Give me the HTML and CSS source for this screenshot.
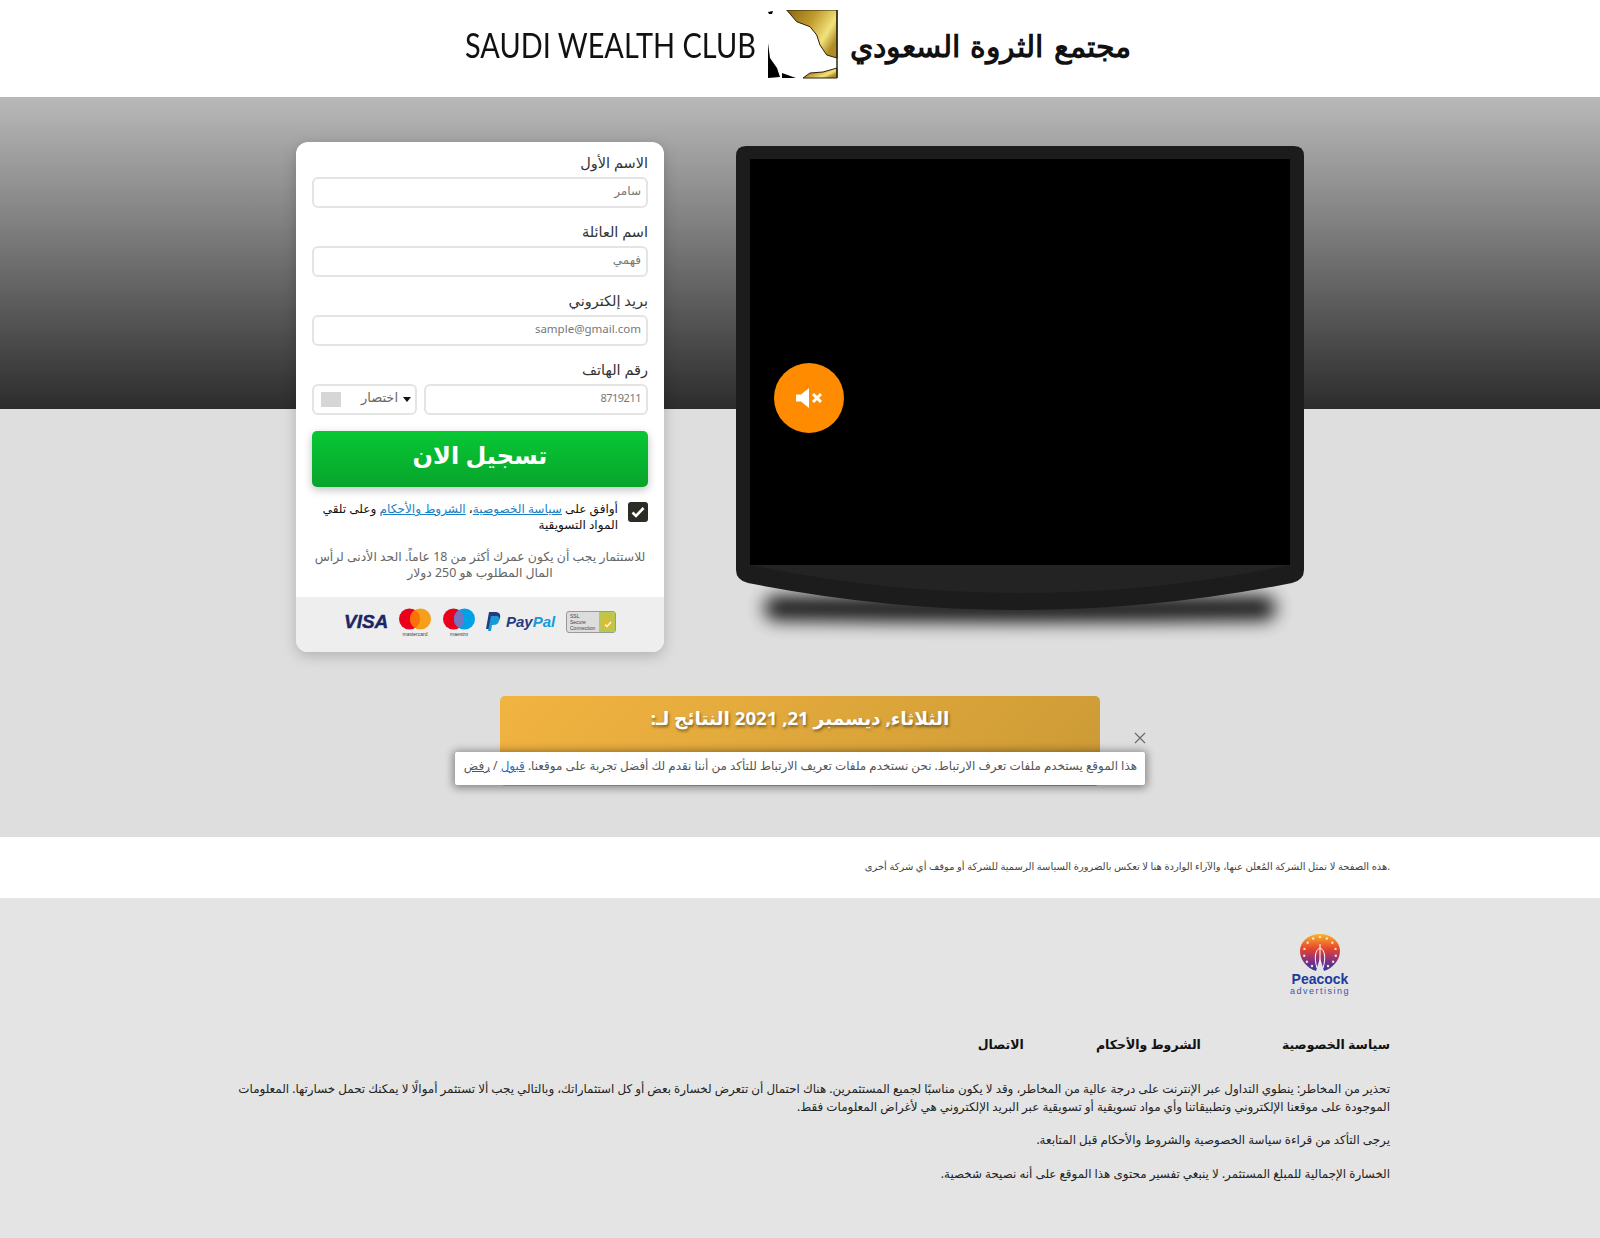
FILE: index.html
```html
<!DOCTYPE html>
<html lang="ar" dir="rtl">
<head>
    <meta charset="UTF-8">
    <title>مجتمع الثروة السعودي</title>
    <link rel="stylesheet" href="styles.css">
</head>
<body>

<header class="site-header">
    <div class="logo" dir="ltr">
        <span class="logo-en">SAUDI WEALTH CLUB</span>
        <svg class="logo-mark" width="70" height="69" viewBox="0 0 70 69">
            <defs>
                <linearGradient id="gold" x1="0" y1="0" x2="1" y2="0.6">
                    <stop offset="0" stop-color="#8a6410"/>
                    <stop offset="0.45" stop-color="#c09a2c"/>
                    <stop offset="0.8" stop-color="#f2e27a"/>
                    <stop offset="1" stop-color="#b08c28"/>
                </linearGradient>
            </defs>
            <path d="M18.700 0H69V48L58.700 45 52 35 48.700 25 42 16.700 28.700 11.700Z" fill="url(#gold)" stroke="#2a2208" stroke-width="1"/>
            <path d="M69 58L55 62 42 63 35 68H69Z" fill="url(#gold)" stroke="#2a2208" stroke-width="1"/>
            <path d="M69 0V68" stroke="#2a2a10" stroke-width="1.500"/>
            <path d="M0 33L2 48 9 58 12 67 0 68Z" fill="#000"/>
            <path d="M14 63L28 68H14Z" fill="#000"/>
            <path d="M0 2L5 1 4 4 1 4Z" fill="#000"/>
        </svg>
        <span class="logo-ar" dir="rtl">مجتمع الثروة السعودي</span>
    </div>
</header>

<section class="hero">
    <div class="hero-row">
        <div class="tv">
            <svg width="568" height="510" viewBox="0 0 568 510">
                <defs>
                    <filter id="blur" x="-10%" y="-100%" width="120%" height="300%">
                        <feGaussianBlur stdDeviation="9"/>
                    </filter>
                </defs>
                <path d="M36 450H532Q548 462 532 474Q284 478 36 474Q20 462 36 450Z" fill="#000" filter="url(#blur)" opacity="0.9"/>
                <path d="M10 0H558Q568 0 568 10V424Q568 434 556 437Q420 464 284 464Q148 464 12 437Q0 434 0 424V10Q0 0 10 0Z" fill="#1c1c1c"/>
                <path d="M14 419H554Q420 447 284 447Q148 447 14 419Z" fill="#232323"/>
                <rect x="14" y="13" width="540" height="406" fill="#000"/>
            </svg>
            <button class="mute-btn">
                <svg width="26" height="20" viewBox="0 0 26 20">
                    <path d="M0 6.500H5L13 0V20L5 13.500H0Z" fill="#fff"/>
                    <path d="M17 6L25 14M25 6L17 14" stroke="#fff" stroke-width="3"/>
                </svg>
            </button>
        </div>

        <form class="signup">
            <div class="signup-body">
                <label class="field-label">الاسم الأول</label>
                <input class="field" type="text" placeholder="سامر">
                <label class="field-label">اسم العائلة</label>
                <input class="field" type="text" placeholder="فهمي">
                <label class="field-label">بريد إلكتروني</label>
                <input class="field field-email" type="text" placeholder="sample@gmail.com">
                <label class="field-label">رقم الهاتف</label>
                <div class="phone-row">
                    <input class="field field-phone" type="text" placeholder="8719211">
                    <div class="prefix">
                        <span class="caret"></span>
                        <span class="prefix-text">اختصار</span>
                        <span class="flag"></span>
                    </div>
                </div>
                <button class="submit" type="button">تسجيل الان</button>
                <div class="consent">
                    <span class="check">
                        <svg width="14" height="12" viewBox="0 0 14 12"><path d="M1.500 6.500L5 10L12.500 2" fill="none" stroke="#fff" stroke-width="2.600"/></svg>
                    </span>
                    <p>أوافق على <a href="#">سياسة الخصوصية</a>، <a href="#">الشروط والأحكام</a> وعلى تلقي المواد التسويقية</p>
                </div>
                <p class="age-note">للاستثمار يجب أن يكون عمرك أكثر من 18 عاماً. الحد الأدنى لرأس المال المطلوب هو 250 دولار</p>
            </div>
            <div class="payments" dir="ltr">
                <span class="visa">VISA</span>
                <span class="card-mark">
                    <svg width="32" height="24" viewBox="0 0 32 24"><circle cx="10.500" cy="12" r="10.500" fill="#eb001b"/><circle cx="21.500" cy="12" r="10.500" fill="#f79e1b"/><path d="M16 3a10.500 10.500 0 0 1 0 18a10.500 10.500 0 0 1 0-18Z" fill="#ff5f00" opacity="0.7"/></svg>
                    <small>mastercard</small>
                </span>
                <span class="card-mark">
                    <svg width="32" height="24" viewBox="0 0 32 24"><circle cx="10.500" cy="12" r="10.500" fill="#eb001b"/><circle cx="21.500" cy="12" r="10.500" fill="#00a2e5"/><path d="M16 3a10.500 10.500 0 0 1 0 18a10.500 10.500 0 0 1 0-18Z" fill="#7673c0"/></svg>
                    <small>maestro</small>
                </span>
                <svg class="paypal-mark" width="15" height="19" viewBox="0 0 15 19">
                    <path d="M3 0H9C13 0 15 2 14 6 13 10 10 11 7 11H5L4 17H0Z" fill="#253b80"/>
                    <path d="M5 4H10C13 4 14 6 13 9 12 12 10 13 7 13H6L5 19H2Z" fill="#179bd7"/>
                </svg>
                <span class="paypal"><b>Pay</b><i>Pal</i></span>
                <span class="ssl">
                    <span class="ssl-text">SSL<br>Secure<br>Connection</span>
                    <svg class="ssl-lock" width="16" height="20" viewBox="0 0 16 20">
                        <rect width="16" height="20" fill="#b9c94e"/>
                        <path d="M5 9V6.500a3 3 0 0 1 6 0V9" fill="none" stroke="#e8b52c" stroke-width="1.500"/>
                        <rect x="3.500" y="9" width="9" height="7" fill="#e8b52c"/>
                        <path d="M6 12.500L8 14.500L12 10" fill="none" stroke="#fff" stroke-width="1.300"/>
                    </svg>
                </span>
            </div>
        </form>
    </div>

    <div class="results">
        <div class="results-box">
            <h2>الثلاثاء, ديسمبر 21, 2021 النتائج لـ:</h2>
        </div>
        <div class="cookie-bar">
            <span class="cookie-close">
                <svg width="12" height="12" viewBox="0 0 12 12"><path d="M1 1L11 11M11 1L1 11" stroke="#666" stroke-width="1.100"/></svg>
            </span>
            <p>هذا الموقع يستخدم ملفات تعرف الارتباط. نحن نستخدم ملفات تعريف الارتباط للتأكد من أننا نقدم لك أفضل تجربة على موقعنا. <a class="accept" href="#">قبول</a> / <a href="#">رفض</a></p>
        </div>
    </div>
</section>

<section class="notice">
    <p dir="ltr">هذه الصفحة لا تمثل الشركة المُعلن عنها، والآراء الواردة هنا لا تعكس بالضرورة السياسة الرسمية للشركة أو موقف أي شركة أخرى.</p>
</section>

<footer class="site-footer">
    <div class="peacock" dir="ltr">
        <svg width="42" height="38" viewBox="0 0 42 38">
            <defs>
                <linearGradient id="fan" x1="0" y1="0" x2="0" y2="1">
                    <stop offset="0" stop-color="#f7b52c"/>
                    <stop offset="0.4" stop-color="#e8442c"/>
                    <stop offset="0.75" stop-color="#7a2f8c"/>
                    <stop offset="1" stop-color="#2a3f9c"/>
                </linearGradient>
            </defs>
            <path d="M21 0C33 0 41 8 41 17 41 26 34 34 25 37L21 24 17 37C8 34 1 26 1 17 1 8 9 0 21 0Z" fill="url(#fan)"/>
            <path d="M21 10L21 30M21 14C16 16 15 24 18 34M21 14C26 16 27 24 24 34" stroke="#fff" stroke-width="1" fill="none"/>
            <g fill="#ffe0c0">
                <circle cx="21" cy="3" r="1.200"/>
                <circle cx="14.200" cy="4.500" r="1.200"/>
                <circle cx="27.800" cy="4.500" r="1.200"/>
                <circle cx="8.700" cy="8.700" r="1.200"/>
                <circle cx="33.300" cy="8.700" r="1.200"/>
                <circle cx="5.500" cy="14.900" r="1.200"/>
                <circle cx="36.500" cy="14.900" r="1.200"/>
                <circle cx="5.200" cy="21.800" r="1.200"/>
                <circle cx="36.800" cy="21.800" r="1.200"/>
                <circle cx="7.900" cy="27.700" r="1.200"/>
                <circle cx="34.100" cy="27.700" r="1.200"/>
                <circle cx="13" cy="32" r="1.200"/>
                <circle cx="29" cy="32" r="1.200"/>
            </g>
        </svg>
        <span class="peacock-name">Peacock</span>
        <span class="peacock-sub">advertising</span>
    </div>

    <nav class="footer-links">
        <a href="#">سياسة الخصوصية</a>
        <a href="#">الشروط والأحكام</a>
        <a href="#">الاتصال</a>
    </nav>

    <div class="footer-text">
        <p>تحذير من المخاطر: ينطوي التداول عبر الإنترنت على درجة عالية من المخاطر، وقد لا يكون مناسبًا لجميع المستثمرين. هناك احتمال أن تتعرض لخسارة بعض أو كل استثماراتك، وبالتالي يجب ألا تستثمر أموالًا لا يمكنك تحمل خسارتها. المعلومات الموجودة على موقعنا الإلكتروني وتطبيقاتنا وأي مواد تسويقية أو تسويقية عبر البريد الإلكتروني هي لأغراض المعلومات فقط.</p>
        <p>يرجى التأكد من قراءة سياسة الخصوصية والشروط والأحكام قبل المتابعة.</p>
        <p>الخسارة الإجمالية للمبلغ المستثمر. لا ينبغي تفسير محتوى هذا الموقع على أنه نصيحة شخصية.</p>
    </div>
</footer>

</body>
</html>
```

FILE: styles.css
```css
* {
    box-sizing: border-box;
}

html, body {
    margin: 0;
    padding: 0;
}

body {
    font-family: "Noto Sans", "DejaVu Sans", sans-serif;
    font-size: 13px;
    color: #222;
    background: #e4e4e4;
}

p {
    margin: 0;
}

/* header */
.site-header {
    height: 97px;
    background: #fff;
    display: flex;
    justify-content: center;
    padding-top: 10px;
}

.logo {
    display: flex;
    align-items: flex-start;
    width: 670px;
}

.logo-en {
    flex: none;
    font-family: "Lato", sans-serif;
    font-weight: 400;
    font-size: 34px;
    line-height: 70px;
    color: #111;
    white-space: nowrap;
    width: 303px;
    transform: scaleX(0.85);
    transform-origin: left center;
}

.logo-mark {
    flex: none;
}

.logo-ar {
    font-family: "DejaVu Serif", serif;
    font-weight: 700;
    font-size: 30px;
    line-height: 74px;
    color: #111;
    margin-left: 12px;
    white-space: nowrap;
}

/* hero */
.hero {
    height: 740px;
    padding-top: 45px;
    background: linear-gradient(#b9b9b9, #2c2c2c 312px, #dedede 312px);
}

.hero-row {
    display: flex;
    justify-content: flex-start;
    gap: 72px;
    padding-right: 296px;
}

.tv {
    position: relative;
    width: 568px;
    height: 506px;
    margin-top: 4px;
}

.tv svg {
    display: block;
}

.mute-btn {
    position: absolute;
    left: 37.500px;
    top: 217px;
    width: 70px;
    height: 70px;
    border: 0;
    padding: 0;
    border-radius: 50%;
    background: #ff8c00;
    display: flex;
    align-items: center;
    justify-content: center;
}

/* form */
.signup {
    width: 368px;
    height: 510px;
    background: #fff;
    border-radius: 12px;
    box-shadow: 0 4px 14px rgba(0,0,0,0.2);
    overflow: hidden;
    display: flex;
    flex-direction: column;
    justify-content: space-between;
}

.signup-body {
    padding: 10px 16px 0;
}

.field-label {
    display: block;
    font-size: 14.500px;
    line-height: 20px;
    margin-bottom: 5px;
    color: #333;
}

.field {
    display: block;
    width: 100%;
    height: 31px;
    border: 2px solid #e4e4e4;
    border-radius: 6px;
    padding: 0 5px 5px;
    margin-bottom: 13px;
    font-family: inherit;
    font-size: 12px;
    background: #fff;
    outline: none;
}

.field::placeholder {
    color: #777;
    opacity: 1;
}

.field-email {
    font-size: 11.500px;
}

.field-phone {
    font-size: 11px;
    letter-spacing: -0.5px;
}

.phone-row {
    display: flex;
    gap: 7px;
}

.phone-row .field {
    flex: 1;
    margin-bottom: 0;
}

.prefix {
    width: 105px;
    height: 31px;
    border: 2px solid #e4e4e4;
    border-radius: 6px;
    display: flex;
    align-items: center;
    padding: 0 4px 0 7px;
    font-size: 13px;
    color: #666;
}

.caret {
    width: 0;
    height: 0;
    border-left: 4px solid transparent;
    border-right: 4px solid transparent;
    border-top: 5px solid #111;
    margin-left: 5px;
}

.prefix-text {
    flex: 1;
    line-height: 16px;
    padding-bottom: 6px;
}

.flag {
    width: 20px;
    height: 15px;
    background: #d6d6d6;
}

.submit {
    display: block;
    width: 100%;
    height: 56px;
    margin-top: 16px;
    border: 0;
    border-radius: 5px;
    background: linear-gradient(#07c834, #08a42c);
    box-shadow: 0 3px 8px rgba(0,0,0,0.25);
    color: #fff;
    font-family: inherit;
    font-size: 24px;
    font-weight: 700;
    padding: 0 0 10px;
}

.consent {
    display: flex;
    gap: 10px;
    margin-top: 14px;
    font-size: 12.100px;
    line-height: 16px;
    color: #111;
}

.consent a {
    color: #1a7fc4;
}

.check {
    flex: none;
    width: 20px;
    height: 20px;
    margin-top: 1px;
    border-radius: 3px;
    background: #2c2c26;
    display: flex;
    align-items: center;
    justify-content: center;
}

.age-note {
    margin-top: 16px;
    font-size: 12.400px;
    line-height: 16px;
    text-align: center;
    color: #666;
}

.payments {
    height: 55px;
    background: #eee;
    display: flex;
    align-items: center;
    padding: 0 0 6px 48px;
    color: #1a2a6c;
}

.visa {
    font-family: "Liberation Sans", sans-serif;
    font-style: italic;
    font-weight: 700;
    font-size: 19px;
    width: 55px;
    color: #1a2566;
    -webkit-text-stroke: 0.4px #1a2566;
}

.card-mark {
    width: 44px;
    display: flex;
    flex-direction: column;
    align-items: flex-start;
}

.card-mark small {
    font-family: "Liberation Sans", sans-serif;
    font-size: 5px;
    line-height: 6px;
    width: 32px;
    text-align: center;
    color: #444;
}

.paypal-mark {
    margin-right: 5px;
    margin-left: -1px;
}

.paypal {
    font-family: "Liberation Sans", sans-serif;
    font-style: italic;
    font-weight: 700;
    font-size: 15px;
    width: 60px;
}

.paypal b {
    color: #253b80;
}

.paypal i {
    color: #179bd7;
}

.ssl {
    width: 50px;
    height: 22px;
    border: 1px solid #999;
    border-radius: 3px;
    background: #ddd;
    display: flex;
    justify-content: space-between;
}

.ssl-text {
    font-family: "Liberation Sans", sans-serif;
    font-size: 5px;
    line-height: 6px;
    padding: 1px 0 0 3px;
    color: #444;
}

/* results box + cookie */
.results {
    position: relative;
    width: 600px;
    margin: 44px auto 0;
}

.results-box {
    height: 90px;
    border-radius: 5px;
    background: linear-gradient(135deg, #f2b441, #cb9a35);
}

.results-box h2 {
    margin: 0;
    padding-top: 8px;
    text-align: center;
    font-size: 18.600px;
    line-height: 28px;
    font-weight: 700;
    color: #fff;
    text-shadow: 1px 2px 3px rgba(0,0,0,0.45);
}

.cookie-bar {
    position: absolute;
    left: -45px;
    top: 56px;
    width: 690px;
    height: 33px;
    background: #fff;
    border-radius: 2px;
    box-shadow: 0 1px 8px 2px rgba(0,0,0,0.4);
    padding: 4px 8px;
    font-size: 11.950px;
    line-height: 20px;
    color: #555;
    white-space: nowrap;
}

.cookie-bar a {
    color: #555;
}

.cookie-bar .accept {
    color: #1f6fc4;
}

.cookie-close {
    position: absolute;
    left: 679px;
    top: -22px;
}

/* notice */
.notice {
    height: 61px;
    background: #fff;
    padding: 22px 210px 0 0;
    font-size: 9.950px;
    line-height: 14px;
    color: #444;
}

.notice p {
    text-align: right;
}

/* footer */
.site-footer {
    height: 340px;
    padding: 36px 210px 0 238px;
}

.peacock {
    width: 60px;
    margin-right: 40px;
    display: flex;
    flex-direction: column;
    align-items: center;
}

.peacock-name {
    font-family: "Liberation Sans", sans-serif;
    font-weight: 700;
    font-size: 14px;
    line-height: 14px;
    color: #1d3a9c;
}

.peacock-sub {
    font-family: "Liberation Sans", sans-serif;
    font-size: 9px;
    line-height: 10px;
    letter-spacing: 1.500px;
    color: #3f55a8;
    white-space: nowrap;
}

.footer-links {
    display: flex;
    gap: 72px;
    margin-top: 39px;
}

.footer-links a {
    font-size: 12.500px;
    font-weight: 700;
    line-height: 20px;
    color: #111;
    text-decoration: none;
}

.footer-links a:first-child {
    margin-left: 9px;
}

.footer-text {
    margin-top: 25px;
    font-size: 11.900px;
    line-height: 17.500px;
    color: #222;
}

.footer-text p {
    margin-bottom: 16px;
}
```
